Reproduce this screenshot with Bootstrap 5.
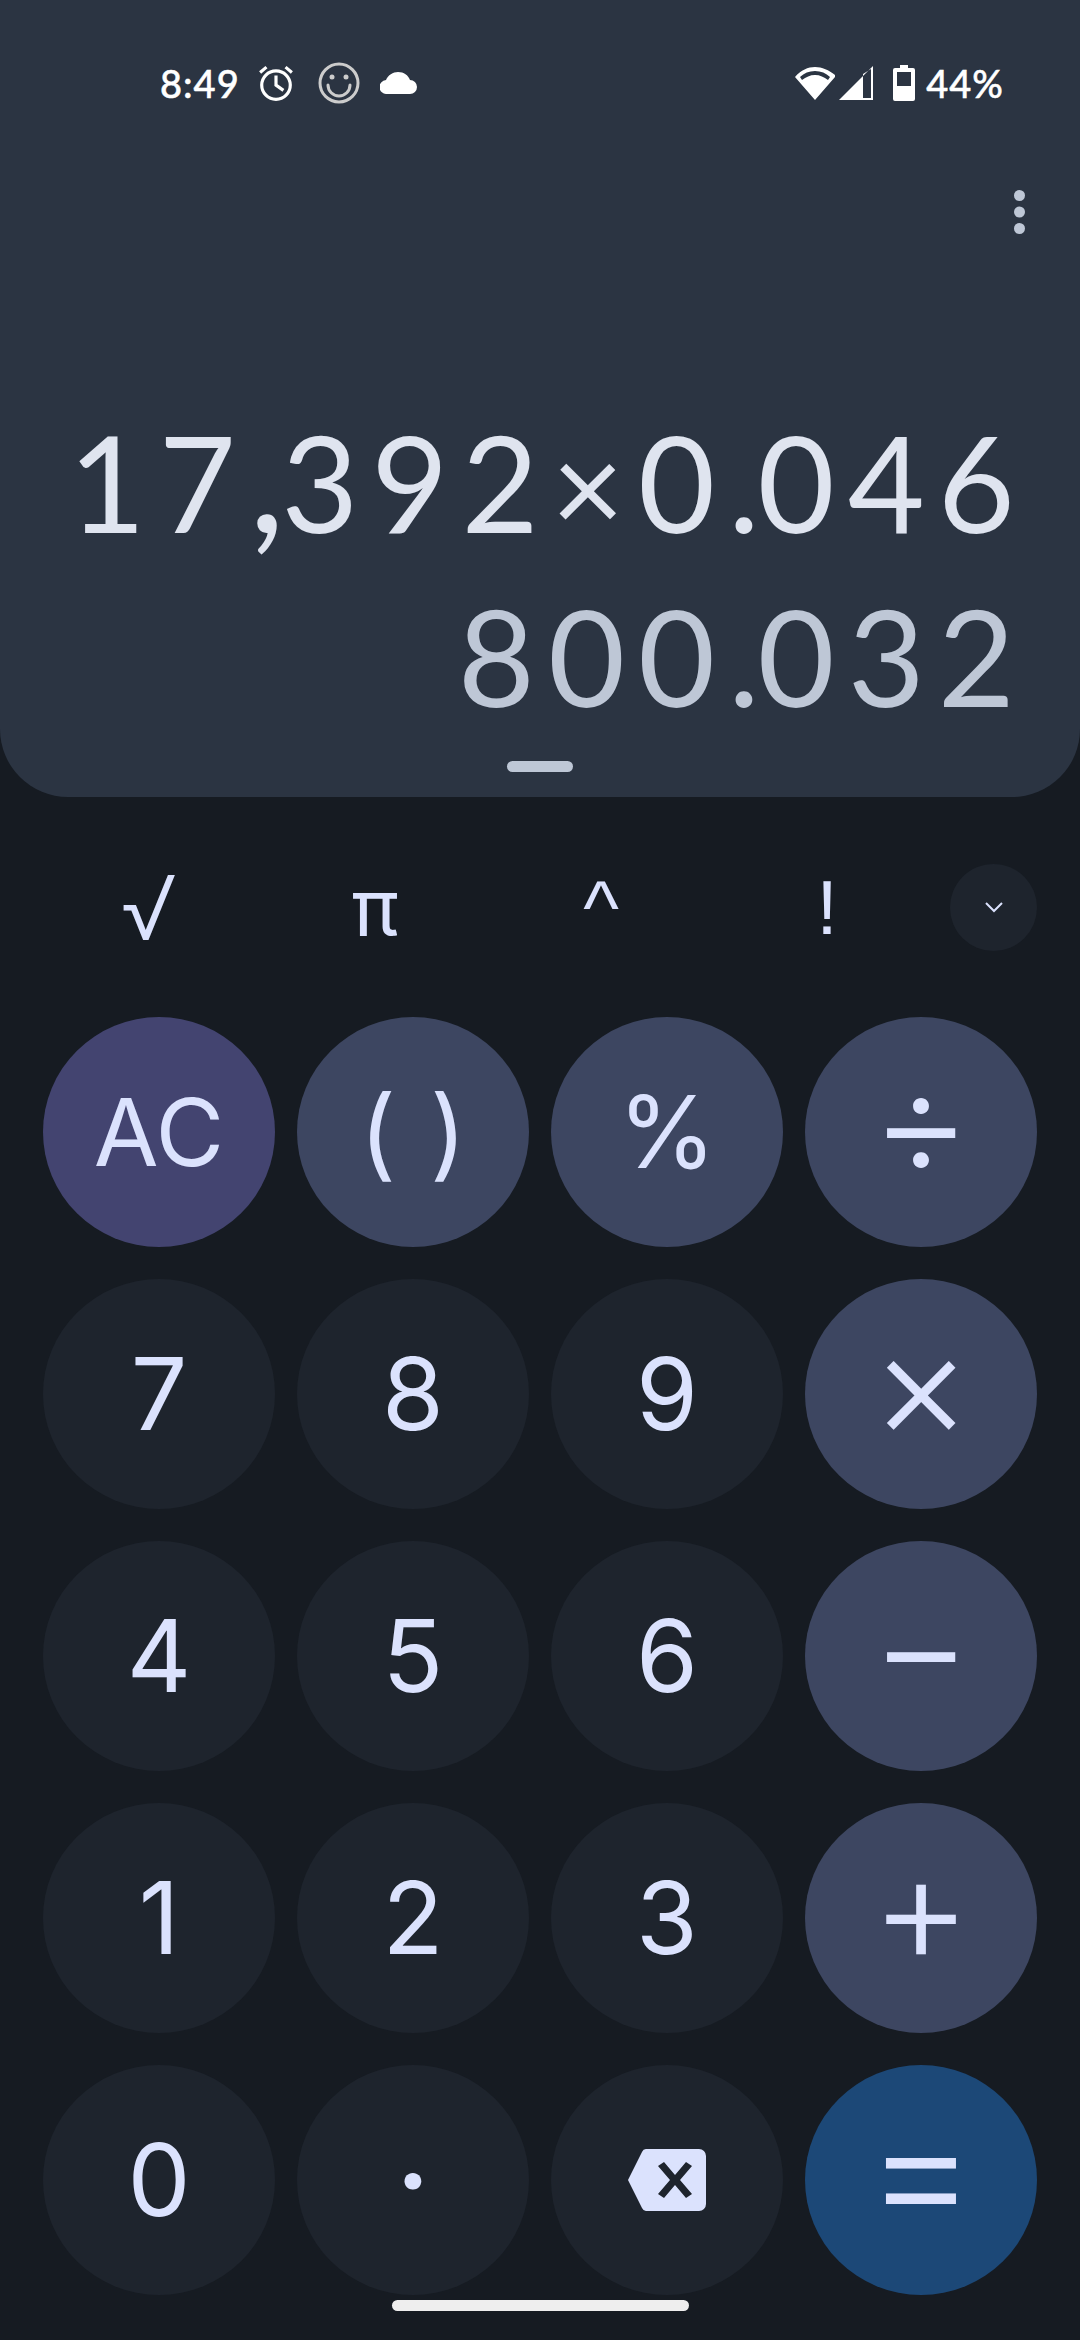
<!DOCTYPE html>
<html lang="en">
<head>
<meta charset="utf-8">
<title>Calculator</title>
<link rel="stylesheet" href="https://cdn.jsdelivr.net/npm/bootstrap@5.3.0/dist/css/bootstrap.min.css">
<style>
html,body{margin:0;background:#161b22;overflow:hidden;}
.phone{width:1080px;height:2340px;background:#161b22;overflow:hidden;font-family:Inter,"Noto Sans",sans-serif;}
.panel{height:797px;background:#2b3442;border-radius:0 0 68px 68px;}
.stat{height:40px;margin-top:63px;padding:0 76px 0 160px;color:#fff;font-size:38px;line-height:40px;font-family:Lato,Inter,sans-serif;font-weight:500;letter-spacing:1px;-webkit-text-stroke:.5px #fff;}
.time{width:98px;}
.cloud{margin-left:20px;}
.batt{margin-left:20px;}
.pct{margin-left:11px;}
.menu-row{margin-top:87px;height:46px;padding-right:55px;}
.expr,.res{height:174px;line-height:174px;font-family:Lato,Inter,sans-serif;font-size:133px;font-weight:400;padding-right:52px;white-space:nowrap;letter-spacing:13px;}
.expr{margin-top:159px;color:#dfe4ef;}
.res{color:#bec7d6;}
.nar{letter-spacing:-2px;}
.cma{font-size:160px;line-height:0;letter-spacing:-4px;}
.tms{font-size:125px;line-height:0;letter-spacing:14px;}
.handle{width:66px;height:11px;background:#bec7d6;border-radius:6px;margin:18px auto 0;}
.sym-row{padding:67px 43px 0 36px;height:154px;}
.sym{width:226px;height:87px;color:#dbe2fd;font-size:76px;line-height:87px;text-align:center;font-family:"Liberation Sans",sans-serif;font-weight:400;}
.sym-root{font-family:Inter,sans-serif;font-size:90px;font-weight:280;}
.sym-pi{font-family:Inter,sans-serif;font-size:78px;font-weight:380;}
.sym-more{width:87px;height:87px;margin-left:10px;background:#1e242d;padding:0;border:0;}
.keys{display:grid;grid-template-columns:repeat(4,232px);grid-auto-rows:230px;gap:32px 22px;padding:66px 43px 0;}
.key{width:232px;height:230px;padding:0;border:0;color:#dbe2fd;font-size:100px;font-weight:380;line-height:1;font-family:Inter,sans-serif;background:#1e242d;display:flex;align-items:center;justify-content:center;}
.key:hover,.key:active{color:#dbe2fd;}
.k-op{background:#3d4661;}
.k-ac{background:#434470;font-size:94px;}
.k-eq{background:#1c4877;}
.k-big{font-size:154px;font-weight:280;padding-bottom:22px;}
.k-eq.k-big{font-size:172px;font-weight:260;padding-bottom:26px;}
.k-par{word-spacing:6px;}
.k-dot{font-weight:600;font-size:106px;}
.homebar{width:297px;height:11px;background:#eee;border-radius:6px;margin:5px auto 0;}
</style>
</head>
<body>
<div class="phone d-flex flex-column">
  <div class="panel d-flex flex-column">
    <div class="stat d-flex justify-content-between align-items-center">
      <div class="d-flex align-items-center">
        <span class="time">8:49</span>
        <svg width="36" height="36" viewBox="0 0 34 34" fill="none" stroke="#fff" stroke-width="3"><circle cx="17" cy="19" r="13.5"/><path d="M17 10v9l7 5M2 7l6-5M32 7l-6-5"/></svg>
        <svg class="ms-4" width="42" height="42" viewBox="0 0 42 42" fill="none" stroke="#ccc" stroke-width="3"><circle cx="21" cy="21" r="19"/><circle cx="14" cy="15" r="2.5" fill="#ccc" stroke="none"/><circle cx="28" cy="15" r="2.5" fill="#ccc" stroke="none"/><path d="M10 23a11 11 0 0 0 22 0" stroke-linecap="round"/></svg>
        <svg class="cloud" width="38" height="22" viewBox="0 0 38 22" fill="#fff"><path d="M7 22a7 7 0 0 1-1-14C8 3 13 0 18 0c6 0 10 3 12 8a7 7 0 0 1 0 14z"/></svg>
      </div>
      <div class="d-flex align-items-center">
        <svg width="40" height="34" viewBox="0 0 40 34" fill="#fff"><path fill-rule="evenodd" d="M20 34 0 11C6 4 13 1 20 1s14 3 20 8v2zM20 5C14 5 9 7 5 11l2 3c4-3 8-5 13-5s9 2 13 5l2-3c-4-4-9-6-15-6z"/></svg>
        <svg class="ms-1" width="34" height="34" viewBox="0 0 34 34" fill="#fff"><path d="M0 34 34 0v34zM24 8v24h8V3z" fill-rule="evenodd"/></svg>
        <svg class="batt" width="22" height="36" viewBox="0 0 22 36" fill="#fff"><path d="M7 0h8v3h5a2 2 0 0 1 2 2v29a2 2 0 0 1-2 2H2a2 2 0 0 1-2-2V5a2 2 0 0 1 2-2h5zM4 7v14h14V7z" fill-rule="evenodd"/></svg>
        <span class="pct">44%</span>
      </div>
    </div>
    <div class="menu-row d-flex justify-content-end">
      <svg width="11" height="44" viewBox="0 0 11 44" fill="#bec7d6"><circle cx="5.5" cy="5.5" r="5.5"/><circle cx="5.5" cy="22" r="5.5"/><circle cx="5.5" cy="38.5" r="5.5"/></svg>
    </div>
    <div class="expr text-end">17<span class="cma">,</span>392<span class="tms">×</span>0<span class="nar">.</span>046</div>
    <div class="res text-end">800<span class="nar">.</span>032</div>
    <div class="handle"></div>
  </div>
  <div class="sym-row d-flex">
    <div class="sym sym-root">√</div><div class="sym sym-pi">π</div><div class="sym">^</div><div class="sym">!</div>
    <button class="btn sym-more rounded-circle d-flex align-items-center justify-content-center" type="button" aria-label="More">
      <svg width="18" height="11" viewBox="0 0 18 11" fill="none" stroke="#dbe2fd" stroke-width="2"><path d="M1 1l8 8 8-8"/></svg>
    </button>
  </div>
  <div class="keys">
    <button class="btn key k-ac rounded-circle" type="button">AC</button>
    <button class="btn key k-op k-par rounded-circle" type="button">( )</button>
    <button class="btn key k-op rounded-circle" type="button">%</button>
    <button class="btn key k-op k-big rounded-circle" type="button">÷</button>
    <button class="btn key rounded-circle" type="button">7</button>
    <button class="btn key rounded-circle" type="button">8</button>
    <button class="btn key rounded-circle" type="button">9</button>
    <button class="btn key k-op k-big rounded-circle" type="button">×</button>
    <button class="btn key rounded-circle" type="button">4</button>
    <button class="btn key rounded-circle" type="button">5</button>
    <button class="btn key rounded-circle" type="button">6</button>
    <button class="btn key k-op k-big rounded-circle" type="button">−</button>
    <button class="btn key rounded-circle" type="button">1</button>
    <button class="btn key rounded-circle" type="button">2</button>
    <button class="btn key rounded-circle" type="button">3</button>
    <button class="btn key k-op k-big rounded-circle" type="button">+</button>
    <button class="btn key rounded-circle" type="button">0</button>
    <button class="btn key k-dot rounded-circle" type="button">·</button>
    <button class="btn key rounded-circle" type="button" aria-label="Backspace">
      <svg width="78" height="62" viewBox="0 0 78 62"><path fill="#dbe2fd" fill-rule="evenodd" d="M19 0h52a7 7 0 0 1 7 7v48a7 7 0 0 1-7 7H19a5 5 0 0 1-5-3L0 31 14 3a5 5 0 0 1 5-3zM30 17l12 14-12 14 6 4 11-13 11 13 6-4-12-14 12-14-6-4-11 13-11-13z"/></svg>
    </button>
    <button class="btn key k-eq k-big rounded-circle" type="button">=</button>
  </div>
  <div class="homebar"></div>
</div>
<script src="https://cdn.jsdelivr.net/npm/bootstrap@5.3.0/dist/js/bootstrap.bundle.min.js"></script>
</body>
</html>
